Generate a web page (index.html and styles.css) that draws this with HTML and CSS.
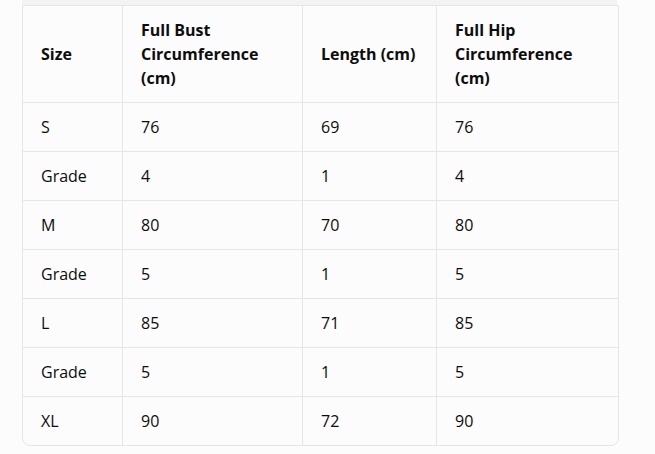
FILE: index.html
```html
<!DOCTYPE html>
<html>
<head>
<meta charset="utf-8">
<link rel="stylesheet" href="styles.css">
</head>
<body>
<div class="wrap">
  <div class="strip"></div>
  <table class="size-table">
    <colgroup>
      <col class="c1"><col class="c2"><col class="c3"><col class="c4">
    </colgroup>
    <thead>
      <tr><th>Size</th><th>Full Bust Circumference (cm)</th><th>Length (cm)</th><th>Full Hip Circumference (cm)</th></tr>
    </thead>
    <tbody>
      <tr><td>S</td><td>76</td><td>69</td><td>76</td></tr>
      <tr><td>Grade</td><td>4</td><td>1</td><td>4</td></tr>
      <tr><td>M</td><td>80</td><td>70</td><td>80</td></tr>
      <tr><td>Grade</td><td>5</td><td>1</td><td>5</td></tr>
      <tr><td>L</td><td>85</td><td>71</td><td>85</td></tr>
      <tr><td>Grade</td><td>5</td><td>1</td><td>5</td></tr>
      <tr><td>XL</td><td>90</td><td>72</td><td>90</td></tr>
    </tbody>
  </table>
</div>
</body>
</html>
```

FILE: styles.css
```css
html, body {
  margin: 0;
  padding: 0;
  background: #fcfcfc;
}
body {
  font-family: "Open Sans", "Noto Sans", sans-serif;
  font-size: 16px;
  color: #0d0d0d;
}
.wrap {
  margin-left: 22px;
  width: 595px;
}
.strip {
  height: 5px;
  background: #f2f3f5;
}
.size-table {
  width: 595px;
  table-layout: fixed;
  border-collapse: separate;
  border-spacing: 0;
  border: 1px solid #e6e6e6;
  border-radius: 0 0 8px 8px;
  background: #fcfcfc;
}
.c1 { width: 100px; }
.c2 { width: 180px; }
.c3 { width: 134px; }
.c4 { width: 181px; }
th, td {
  text-align: left;
  vertical-align: middle;
  padding: 12px 18px;
  line-height: 24px;
  border-right: 1px solid #e6e6e6;
  border-bottom: 1px solid #e6e6e6;
}
th:last-child, td:last-child { border-right: none; }
tbody tr:last-child td { border-bottom: none; }
th { font-weight: 700; }
td { font-weight: 400; }
```
